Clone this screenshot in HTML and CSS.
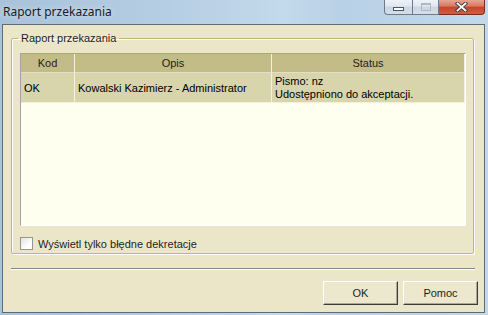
FILE: index.html
```html
<!DOCTYPE html>
<html>
<head>
  <meta charset="UTF-8">
  <title>Raport przekazania</title>
  <link rel="stylesheet" href="styles.css">
</head>
<body>
  <div class="window">
    <div class="titlebar">
      <span class="title">Raport przekazania</span>
      <div class="caption">
        <span class="cap cap-min"><span class="min-glyph"></span></span>
        <span class="cap cap-max"><span class="max-glyph"></span></span>
        <span class="cap cap-close">
          <svg width="13" height="10" viewBox="0 0 13 10">
            <path d="M2.5 1.5 L10.5 8.5 M10.5 1.5 L2.5 8.5" stroke="#3b3b3b" stroke-width="3.6" stroke-linecap="square"/>
            <path d="M2.5 1.5 L10.5 8.5 M10.5 1.5 L2.5 8.5" stroke="#fff" stroke-width="1.8" stroke-linecap="square"/>
          </svg>
        </span>
      </div>
    </div>

    <div class="client">
      <fieldset class="group">
        <legend>Raport przekazania</legend>
        <div class="list">
          <table>
            <thead>
              <tr>
                <th class="c-kod">Kod</th>
                <th class="c-opis">Opis</th>
                <th class="c-status">Status</th>
              </tr>
            </thead>
            <tbody>
              <tr>
                <td>OK</td>
                <td>Kowalski Kazimierz - Administrator</td>
                <td>Pismo: nz<br>Udostępniono do akceptacji.</td>
              </tr>
            </tbody>
          </table>
        </div>
        <label class="check"><span class="box"></span>Wyświetl tylko błędne dekretacje</label>
      </fieldset>

      <div class="separator"></div>

      <div class="buttons">
        <button class="btn">OK</button>
        <button class="btn">Pomoc</button>
      </div>
    </div>
  </div>
</body>
</html>
```

FILE: styles.css
```css
* {
  padding: 0;
  margin: 0;
  box-sizing: border-box;
}
body {
  width: 488px;
  height: 315px;
  overflow: hidden;
  font: 11px "Liberation Sans", Arial, sans-serif;
  color: #000;
}
.window {
  height: 315px;
  display: flex;
  flex-direction: column;
  padding: 0 3px 2px 2px;
  background: linear-gradient(90deg, #a7c2da 0%, #b6cee3 35%, #c3d9ec 58%, #b9d1e6 70%, #c2d8eb 100%);
}
.titlebar {
  height: 24px;
  display: flex;
  justify-content: space-between;
  align-items: flex-start;
}
.title {
  padding: 3px 0 0 1px;
  font: 12px "Noto Sans", sans-serif;
  color: #1b1b1b;
  text-shadow: 0 0 6px rgba(235, 244, 251, 0.9);
}
.caption {
  display: flex;
}
.cap {
  height: 15px;
  display: flex;
  align-items: center;
  justify-content: center;
  border: 1px solid #6c7a8b;
  border-top: none;
}
.cap-min {
  width: 29px;
  border-radius: 0 0 0 4px;
  background: linear-gradient(#eef3f8, #dfe7ef 45%, #c9d5e1 50%, #d6dfe9);
}
.cap-max {
  width: 26px;
  border-left: none;
  background: linear-gradient(#eef3f8, #dfe7ef 45%, #c9d5e1 50%, #d6dfe9);
}
.cap-close {
  width: 46px;
  border-left: none;
  border-color: #7b2c1f;
  border-radius: 0 0 4px 0;
  background: linear-gradient(#e7a593, #d8765f 45%, #c6442a 50%, #d35d40);
}
.min-glyph {
  width: 11px;
  height: 4px;
  margin-top: 3px;
  background: #fff;
  border: 1px solid #4b5968;
}
.max-glyph {
  width: 10px;
  height: 8px;
  border: 1px solid #aeb9c6;
  border-top-width: 2px;
}
.client {
  flex: 1;
  border: 1px solid #5f6c78;
  background: #ece6c9;
}
.group {
  margin: 7px 10px 0 8px;
  padding: 8px 7px 3px 8px;
  border: 1px solid #c6b57a;
  border-radius: 2px;
  box-shadow: 1px 1px 0 #fff, inset 1px 1px 0 #fff;
}
.group legend {
  margin-left: -2px;
  padding: 0 3px;
  line-height: 13px;
  color: #1e1e1e;
}
.list {
  height: 173px;
  border: 1px solid;
  border-color: #a3a3a3 #fff #fff #a3a3a3;
  background: #fffff0;
}
table {
  width: 100%;
  border-collapse: separate;
  border-spacing: 0;
  table-layout: fixed;
}
th {
  height: 19px;
  font-weight: normal;
  text-align: center;
  color: #1e1e1e;
  background: #c3bc88;
  border-right: 1px solid #f4f1de;
  border-bottom: 1px solid #e3dfc0;
}
.c-kod {
  width: 54px;
}
.c-opis {
  width: 197px;
}
td {
  padding: 2px 3px 1px;
  line-height: 13px;
  vertical-align: middle;
  text-align: left;
  background: #d8d4ab;
  border-right: 1px solid #f4f1de;
  border-bottom: 1px solid #f4f1de;
}
.check {
  display: flex;
  align-items: center;
  margin-top: 11px;
  height: 13px;
  color: #1e1e1e;
}
.box {
  width: 13px;
  height: 13px;
  margin-right: 5px;
  border: 1px solid #959595;
  background: linear-gradient(135deg, #e4e2da, #fff 70%);
}
.separator {
  height: 2px;
  margin: 14px 9px 0 8px;
  border-top: 1px solid #858585;
  border-bottom: 1px solid #fff;
}
.buttons {
  display: flex;
  justify-content: flex-end;
  gap: 5px;
  margin-top: 11px;
  padding-right: 6px;
}
.btn {
  width: 75px;
  height: 24px;
  font: 11px "Liberation Sans", Arial, sans-serif;
  color: #1e1e1e;
  background: #ece7cd;
  border: 1px solid;
  border-color: #fff #3c3c3c #3c3c3c #fff;
  box-shadow: inset -1px -1px 0 #aca899;
}
```
